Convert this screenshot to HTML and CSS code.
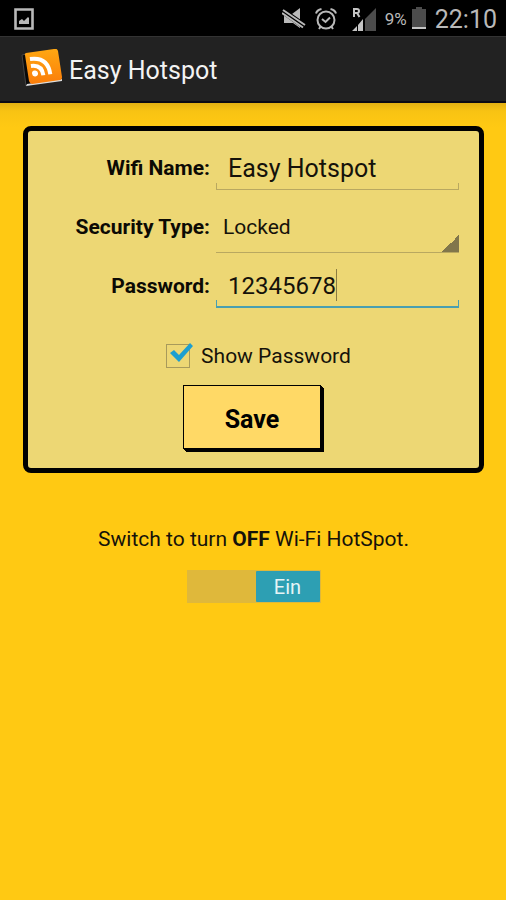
FILE: index.html
```html
<!DOCTYPE html>
<html lang="en">
<head>
<meta charset="utf-8">
<meta name="viewport" content="width=device-width, initial-scale=1">
<title>Easy Hotspot</title>
<link rel="stylesheet" href="styles.css">
</head>
<body>
<div class="status-bar">
  <svg width="20" height="22" viewBox="0 0 20 22" aria-hidden="true">
    <path d="M1.500 1.500h17v19h-17z" fill="none" stroke="#b9b9b9" stroke-width="2.600"/>
    <path d="M5 16v-3l3-2 2 2 4-4 1 1v6z" fill="#b9b9b9"/>
  </svg>
  <div class="status-icons">
    <svg width="24" height="22" viewBox="0 0 24 22" aria-hidden="true">
      <path d="M2 6h8l8-6v20l-7-5H2z" fill="#b9b9b9"/>
      <path d="M0 2.500l23 16" stroke="#000" stroke-width="6"/>
      <path d="M1 2l22 15M0 5l21 14.500" stroke="#b9b9b9" stroke-width="2"/>
    </svg>
    <svg width="22" height="22" viewBox="0 0 22 22" fill="none" stroke="#b9b9b9" stroke-width="2" aria-hidden="true">
      <circle cx="11" cy="12" r="8.500"/>
      <path d="M1 5.500Q2 2 6.500 1M21 5.500Q20 2 15.500 1M4 21l2-3M18 21l-2-3M7 11l3.500 3L15 9.500"/>
    </svg>
    <svg class="status-signal" width="24" height="24" viewBox="0 0 24 24" aria-hidden="true">
      <path d="M24 1v23H13V12z" fill="#4c4c4c"/>
      <path d="M0 24l5-5v5zM6 24v-6l5-6v12z" fill="#c4c4c4"/>
      <path d="M2 10V2h3q2 0 2 2t-2 2H2M5 6l2.500 4" fill="none" stroke="#c4c4c4" stroke-width="2"/>
    </svg>
    <span class="status-percent">9%</span>
    <svg width="14" height="23" viewBox="0 0 14 23" aria-hidden="true">
      <path d="M4 0h6v2h4v18H0V2h4z" fill="#4c4c4c"/>
      <path d="M0 20h14v2H0z" fill="#c4c4c4"/>
    </svg>
    <span class="status-clock">22:10</span>
  </div>
</div>
<header class="action-bar">
  <svg width="42" height="40" viewBox="0 0 42 40" aria-hidden="true">
    <defs>
      <linearGradient id="tile" x1="0" y1="0" x2="0" y2="1">
        <stop offset="0" stop-color="#ffa812"/>
        <stop offset="1" stop-color="#fb7d0a"/>
      </linearGradient>
    </defs>
    <path d="M1 6l4-1 6 30-6 2z" fill="#090909" stroke="#444" stroke-width="1"/>
    <path d="M5 37l36-5v-2L6 35z" fill="#ddd"/>
    <path d="M4 6Q3 5 5 4L33 0q3-1 4 2l4 26q0 3-2 3L11 35q-2 0-3-3z" fill="url(#tile)"/>
    <g transform="rotate(-8 17 24)" fill="none" stroke="#fff" stroke-width="4">
      <circle cx="14" cy="24" r="3" fill="#fff" stroke="none"/>
      <path d="M11 16q11 0 11 11M11 9q18 0 18 18"/>
    </g>
  </svg>
  <h1 class="title">Easy Hotspot</h1>
</header>
<main class="content">
  <form class="panel">
    <div class="fields">
      <label class="field-label" for="wifi-name">Wifi Name:</label>
      <div class="field"><input class="text-field" id="wifi-name" type="text" value="Easy Hotspot"></div>
      <label class="field-label" for="security">Security Type:</label>
      <select class="spinner" id="security"><option>Locked</option></select>
      <label class="field-label" for="password">Password:</label>
      <div class="field field-active"><input class="text-field text-digits" id="password" type="text" value="12345678"><span class="caret"></span></div>
    </div>
    <label class="show-password">
      <span class="tick">
        <input class="tick-box" type="checkbox" checked>
        <svg class="tick-mark" width="26" height="22" viewBox="0 0 26 22" aria-hidden="true">
          <path d="M2 11l4-3 5 5L22 1l3 3-14 16z" fill="#1d9fd0"/>
        </svg>
      </span>
      Show Password
    </label>
    <button class="save" type="button">Save</button>
  </form>
  <label class="switch-text" for="hotspot">Switch to turn <b>OFF</b> Wi-Fi HotSpot.</label>
  <label class="switch">
    <input class="switch-input" id="hotspot" type="checkbox" role="switch" checked>
    <span class="switch-thumb">Ein</span>
  </label>
</main>
</body>
</html>
```
FILE: styles.css
```css
* {
  box-sizing: border-box;
}

body {
  margin: 0;
  min-height: 100vh;
  background: #ffc913;
  color: #15120a;
  font-family: Roboto, sans-serif;
  font-size: 21px;
  line-height: 24px;
}

.status-bar {
  display: flex;
  align-items: center;
  justify-content: space-between;
  height: 36px;
  padding: 1px 9px 0 14px;
  background: #000;
  color: #b9b9b9;
}

.status-icons {
  display: flex;
  align-items: center;
  gap: 9px;
}

.status-signal {
  margin-left: 6px;
}

.status-percent {
  font-size: 17px;
  margin-right: -4px;
}

.status-clock {
  font-size: 25px;
  padding-top: 3px;
}

.action-bar {
  display: flex;
  align-items: center;
  gap: 6px;
  height: 67px;
  padding: 0 21px;
  background: #222;
  border-top: 1px solid #333;
  border-bottom: 2px solid #0c0a14;
}

.title {
  margin: 0;
  padding-top: 4px;
  color: #f3f3f3;
  font-size: 25px;
  font-weight: 400;
  line-height: 32px;
}

.content {
  display: flex;
  flex-direction: column;
  align-items: center;
  padding: 23px 22px 24px 23px;
  background: linear-gradient(#e3b013, #f8c313 8px, #ffc913 24px);
}

.panel {
  display: flex;
  flex-direction: column;
  align-items: center;
  width: 100%;
  padding: 15px 20px 19px;
  background: #edd774;
  border: 5px solid #000;
  border-radius: 8px;
}

.fields {
  display: grid;
  grid-template-columns: 2fr 3fr;
  align-items: center;
  gap: 11px 6px;
  width: 100%;
}

.field-label {
  color: #0c0a04;
  font-weight: 700;
  text-align: right;
  white-space: nowrap;
}

.field {
  position: relative;
  height: 44px;
}

.field::after {
  content: "";
  position: absolute;
  inset: auto 0 0;
  height: 6px;
  border: 1px solid #b9a860;
  border-top: 0;
}

.field-active::after {
  border-color: #4a9fb0;
  border-bottom-width: 2px;
}

.text-field {
  display: block;
  width: 100%;
  height: 44px;
  padding: 0 12px;
  border: 0;
  outline: 0;
  background: none;
  color: #15120a;
  font: 25px Roboto, sans-serif;
}

.text-digits {
  font-size: 24px;
}

.caret {
  position: absolute;
  top: 5px;
  left: 120px;
  width: 1px;
  height: 32px;
  background: #8a7c42;
}

.spinner {
  appearance: none;
  width: 100%;
  height: 52px;
  padding: 0 7px;
  border: 0;
  border-bottom: 1px solid #b9a860;
  border-radius: 0;
  outline: 0;
  background: linear-gradient(135deg, transparent 50%, #81764b 50%) right bottom / 17px 17px no-repeat;
  color: #15120a;
  font: 21px Roboto, sans-serif;
}

.show-password {
  display: flex;
  align-items: center;
  gap: 11px;
  margin-top: 36px;
  padding-left: 10px;
}

.tick {
  position: relative;
  display: flex;
}

.tick-box {
  appearance: none;
  width: 24px;
  height: 24px;
  margin: 0;
  border: 1px solid #a89a5b;
}

.tick-mark {
  position: absolute;
  top: -2px;
  left: 2px;
}

.save {
  width: 138px;
  height: 64px;
  margin: 17px 3px 0 0;
  padding: 5px 0 0;
  background: #ffd966;
  border: 1px solid #000;
  box-shadow: 1px 1px #000, 2px 2px #000, 3px 3px #000;
  color: #000;
  font: 700 25px Roboto, sans-serif;
}

.switch-text {
  margin-top: 54px;
}

.switch {
  position: relative;
  display: flex;
  justify-content: flex-end;
  width: 134px;
  height: 33px;
  margin-top: 19px;
  padding: 1px;
  background: #dfb83b;
}

.switch-input {
  appearance: none;
  position: absolute;
  inset: 0;
  margin: 0;
}

.switch-thumb {
  width: 64px;
  background: #2d9fb3;
  border-radius: 1px;
  color: #e6f4f6;
  font-size: 20px;
  line-height: 33px;
  text-align: center;
}
```
